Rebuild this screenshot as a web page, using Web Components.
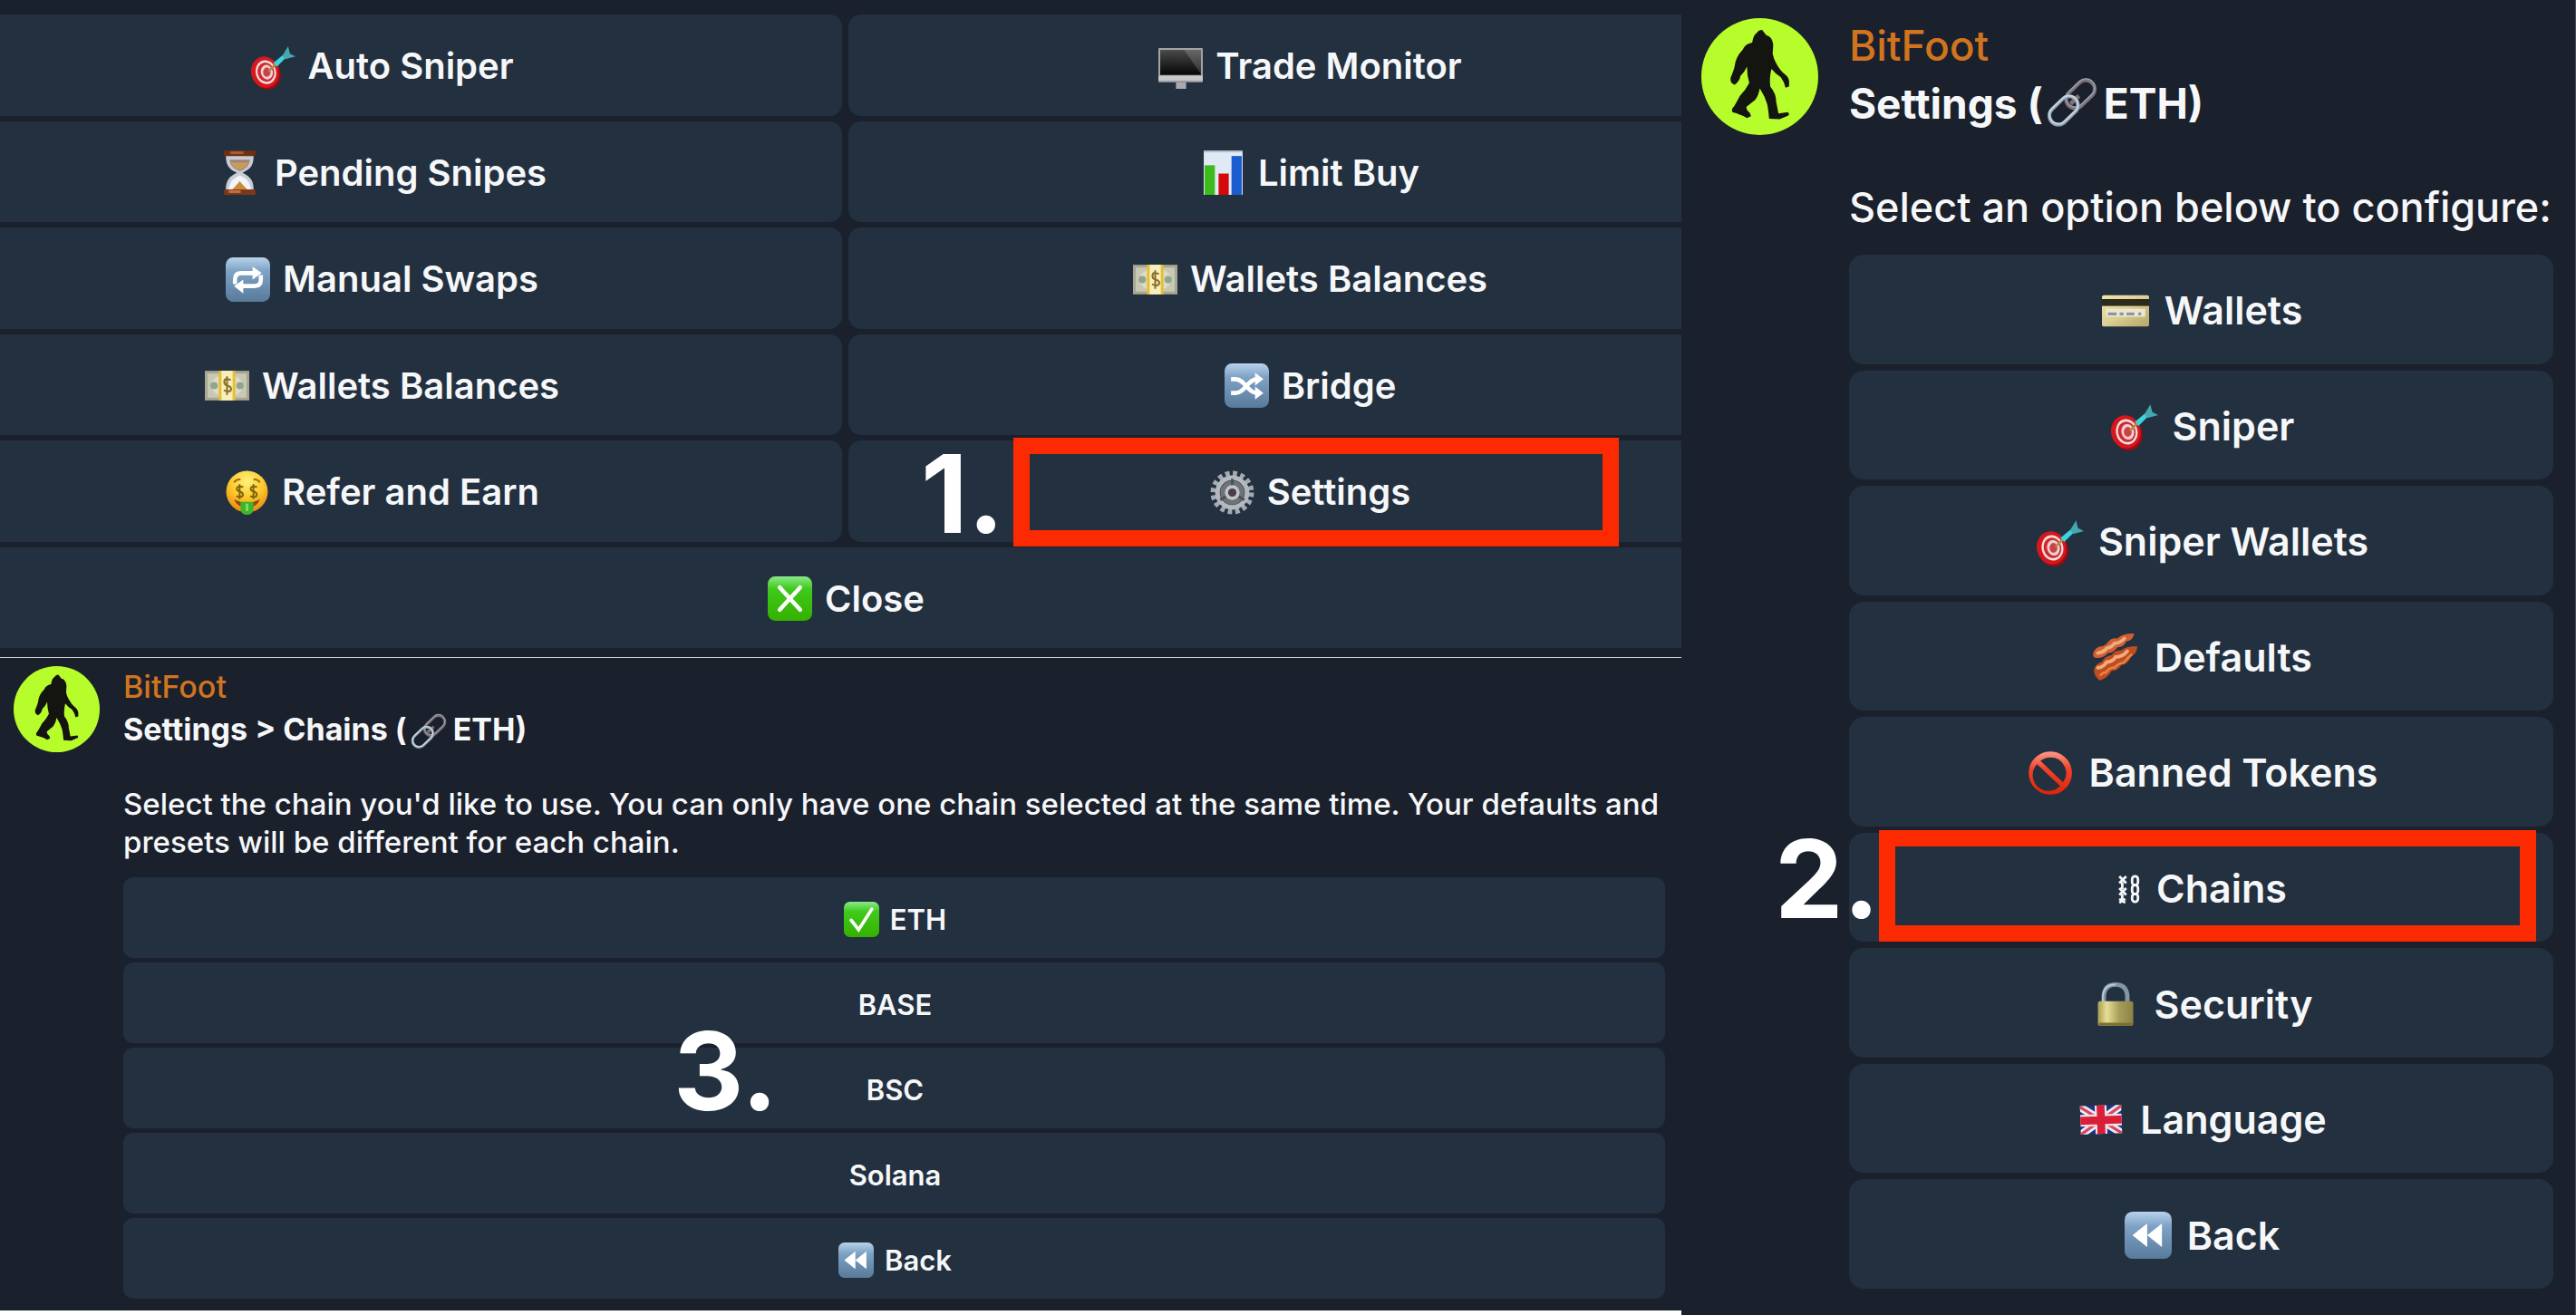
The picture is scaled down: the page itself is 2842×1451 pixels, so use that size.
<!DOCTYPE html>
<html lang="en">
<head>
<meta charset="utf-8">
<title>BitFoot - choosing a chain</title>
<style>
  :root {
    --bg: #1b202d;
    --button: #223040;
    --text: #f6f7f8;
    --brand: #d1741f;
    --mark: #fc2a00;
  }
  body {
    margin: 0;
    background: var(--bg);
    color: var(--text);
    font-family: Inter, Roboto, "Liberation Sans", sans-serif;
  }
  /* the two button columns run past both edges of the panel */
  .menu key-board { margin: 0 -98px 0 -88px; }
</style>
</head>
<body>
<guide-page>
  <bot-panel slot="menu" class="menu">
    <key-board columns="2">
      <menu-button icon="target">Auto Sniper</menu-button>
      <menu-button icon="monitor">Trade Monitor</menu-button>
      <menu-button icon="hourglass">Pending Snipes</menu-button>
      <menu-button icon="chart">Limit Buy</menu-button>
      <menu-button icon="repeat">Manual Swaps</menu-button>
      <menu-button icon="money">Wallets Balances</menu-button>
      <menu-button icon="money">Wallets Balances</menu-button>
      <menu-button icon="shuffle">Bridge</menu-button>
      <menu-button icon="face">Refer and Earn</menu-button>
      <guide-step number="1."><menu-button icon="gear">Settings</menu-button></guide-step>
      <menu-button icon="cross" wide>Close</menu-button>
    </key-board>
  </bot-panel>

  <bot-message slot="chains" class="chains">
    <span slot="title">Settings &gt; Chains (<bot-icon name="link"></bot-icon>ETH)</span>
    <span slot="text">Select the chain you'd like to use. You can only have one chain selected at the same time. Your defaults and presets will be different for each chain.</span>
    <key-board>
      <menu-button icon="check">ETH</menu-button>
      <menu-button>BASE</menu-button>
      <guide-step number="3." plain><menu-button>BSC</menu-button></guide-step>
      <menu-button>Solana</menu-button>
      <menu-button icon="rewind">Back</menu-button>
    </key-board>
  </bot-message>

  <bot-message slot="settings" class="settings">
    <span slot="title">Settings (<bot-icon name="link"></bot-icon>ETH)</span>
    <span slot="text">Select an option below to configure:</span>
    <key-board>
      <menu-button icon="card">Wallets</menu-button>
      <menu-button icon="target">Sniper</menu-button>
      <menu-button icon="target">Sniper Wallets</menu-button>
      <menu-button icon="bacon">Defaults</menu-button>
      <menu-button icon="ban">Banned Tokens</menu-button>
      <guide-step number="2."><menu-button icon="chains">Chains</menu-button></guide-step>
      <menu-button icon="lock">Security</menu-button>
      <menu-button icon="flag">Language</menu-button>
      <menu-button icon="rewind">Back</menu-button>
    </key-board>
  </bot-message>
</guide-page>

<script>
const blueTile = `
  <linearGradient id="g" x2="0" y2="1"><stop offset="0" stop-color="#b9d3ea"/><stop offset=".3" stop-color="#7fa3c6"/><stop offset="1" stop-color="#587a9b"/></linearGradient>
  <rect width="48" height="48" rx="8" fill="url(#g)"/>`;
const greenTile = `
  <linearGradient id="g" x2="0" y2="1"><stop offset="0" stop-color="#8be98a"/><stop offset=".28" stop-color="#3fca1c"/><stop offset="1" stop-color="#35b000"/></linearGradient>
  <rect width="48" height="48" rx="8" fill="url(#g)"/>`;

// name: [viewBox width, drawing], every drawing is 48 units high
const ICONS = {
  target: [48, `
    <ellipse cx="18" cy="32" rx="15" ry="17" transform="rotate(-14 18 32)" fill="#9c0a0e"/>
    <ellipse cx="16" cy="30" rx="15" ry="17" transform="rotate(-14 16 30)" fill="#d6171c"/>
    <ellipse cx="17" cy="30" rx="11" ry="13" transform="rotate(-14 17 30)" fill="#f5dfe0"/>
    <ellipse cx="17" cy="30" rx="9" ry="10.500" transform="rotate(-14 17 30)" fill="#cf2a30"/>
    <ellipse cx="18" cy="30" rx="6.500" ry="8" transform="rotate(-14 18 30)" fill="#f1cfd0"/>
    <ellipse cx="18" cy="30" rx="4" ry="5" fill="#c4444a"/>
    <path d="M20 29l7-7" stroke="#b98a3c" stroke-width="2.500"/>
    <path d="M25 20l12-10 3 3-11 11z" fill="#3cd3dc"/>
    <path d="M35 12L41 2l2 8 6 3-11 3z" fill="#43a9ae"/>`],
  monitor: [48, `
    <linearGradient id="g" x2="0" y2="1"><stop offset="0" stop-color="#4a4a4a"/><stop offset="1" stop-color="#050505"/></linearGradient>
    <rect y="4" width="48" height="37" rx="1" fill="#a3a3a6"/>
    <rect x="2" y="6" width="44" height="27" fill="url(#g)"/>
    <path d="M28 6h18v26z" fill="#fff" opacity=".16"/>
    <rect y="34" width="48" height="5" fill="#c9c9cc"/>
    <path d="M19 41h11v7H19z" fill="#a9a9ad"/>`],
  hourglass: [48, `
    <g transform="translate(6)">
      <path d="M3 5h30c0 10-2 15-12 19 10 5 12 10 12 19H3c0-9 2-14 12-19C5 20 3 15 3 5z" fill="#c8ccd6"/>
      <path d="M7 10h22c-1 7-4 9-10 12h-2C11 19 8 17 7 10z" fill="#9c8576"/>
      <path d="M8 13h20c-2 5-5 6-10 8-5-2-8-3-10-8z" fill="#c99a5e"/>
      <path d="M6 42c1-8 5-12 12-15 7 3 11 7 12 15z" fill="#f2f4f8"/>
      <path d="M9 43c3-3 7-7 9-10 2 3 6 7 9 10z" fill="#c98a3c"/>
      <rect x="1" width="34" height="6" rx="1" fill="#6d3013"/><rect x="8" y="1" width="14" height="3" fill="#a35c33"/>
      <rect x="1" y="42" width="34" height="6" rx="1" fill="#7d3917"/><rect x="6" y="43" width="13" height="3" fill="#c27042"/>
    </g>`],
  chart: [48, `
    <g transform="translate(2)">
      <rect x="1" width="42" height="48" fill="#dfeaf5"/>
      <rect x="1" width="42" height="2" fill="#b5bfc9"/>
      <rect x="2" y="16" width="11" height="32" fill="#3dbb1c"/>
      <rect x="17" y="25" width="11" height="23" fill="#d5090d"/>
      <rect x="31" y="6" width="11" height="42" fill="#1a5bd0"/>
    </g>`],
  repeat: [48, blueTile + `
    <path d="M10 29v-5q0-7 7-7h14M38 19v5q0 7-7 7H17" fill="none" stroke="#fff" stroke-width="4.500"/>
    <path d="M29 10l10 7-10 7zM19 24L9 31l10 8z" fill="#fff"/>`],
  shuffle: [48, blueTile + `
    <path d="M7 17h5c10 0 13 15 23 15h1M7 32h5c10 0 13-15 23-15h1" fill="none" stroke="#fff" stroke-width="4.500"/>
    <path d="M33 10l9 7-9 7zM33 25l9 7-9 7z" fill="#fff"/>`],
  rewind: [48, blueTile + `
    <path d="M8 24l15-12v24zM23 24l15-12v24z" fill="#fff"/>`],
  money: [48, `
    <rect y="8" width="48" height="32" fill="#a8a793"/>
    <rect x="3" y="11" width="42" height="26" fill="#c9c8b3"/>
    <ellipse cx="24" cy="24" rx="17" ry="12" fill="#dcdccb"/>
    <circle cx="10" cy="24" r="4" fill="#8ea58e"/><circle cx="38" cy="24" r="4" fill="#8ea58e"/>
    <rect x="15" y="8" width="18" height="32" fill="#e7bf35"/>
    <rect x="18" y="8" width="12" height="32" fill="#f6efbd"/>
    <path d="M28 18q-7-3-7 2 0 3 3.500 4 4 1 4 4-1 4-8 1M24 14v20" fill="none" stroke="#8a6f2a" stroke-width="2"/>`],
  face: [48, `
    <radialGradient id="g" cy=".25" r=".8"><stop offset="0" stop-color="#fff27a"/><stop offset=".5" stop-color="#fdc92c"/><stop offset="1" stop-color="#e5820c"/></radialGradient>
    <circle cx="24" cy="23" r="22.500" fill="url(#g)"/>
    <path d="M10 13q3-4 7-3M38 13q-3-4-7-3" fill="none" stroke="#a86a12" stroke-width="2"/>
    <path d="M20 18q-7-2-7 2 0 2 3.500 3 3.500 1 3 4-1 3-7 1M16 15v16M35 18q-7-2-7 2 0 2 3.500 3 3.500 1 3 4-1 3-7 1M31 15v16" fill="none" stroke="#7d6410" stroke-width="2"/>
    <path d="M10 31q14 8 28 0-3 9-14 9t-14-9z" fill="#8a4a12"/>
    <path d="M17 34h14v8q-1 6-7 6t-7-6z" fill="#3fb52b"/><path d="M24 36v8" stroke="#7be060" stroke-width="3"/>`],
  cross: [48, greenTile + `
    <path d="M13 12l22 24M35 12L13 36" stroke="#fff" stroke-width="4.500" stroke-linecap="round"/>`],
  check: [48, greenTile + `
    <path d="M10 25l10 13L38 10" fill="none" stroke="#fff" stroke-width="4.500" stroke-linecap="round"/>`],
  gear: [48, `
    <circle cx="24" cy="24" r="20.500" fill="none" stroke="#a3abb1" stroke-width="6" stroke-dasharray="4.600 3.450"/>
    <circle cx="24" cy="24" r="16" fill="none" stroke="#b5b9bd" stroke-width="5"/>
    <circle cx="24" cy="24" r="13" fill="#6d7379"/>
    <path d="M24 24V9M24 24l13 8M24 24l-13 8" stroke="#4b5158" stroke-width="3"/>
    <circle cx="24" cy="24" r="8" fill="#bfc6cb"/><circle cx="24" cy="24" r="4.500" fill="#4a3f42"/>`],
  card: [48, `
    <linearGradient id="g" x2="1" y2="1"><stop offset="0" stop-color="#efe5a8"/><stop offset=".5" stop-color="#dccf94"/><stop offset="1" stop-color="#b5a66b"/></linearGradient>
    <rect y="8" width="48" height="32" rx="2" fill="url(#g)"/>
    <rect y="12" width="48" height="7" fill="#2b2a1c"/>
    <rect x="4" y="22" width="40" height="8" fill="#ece8cf"/>
    <path d="M6 27h9M18 27h4M25 27h8M37 27h3" stroke="#8f93a8" stroke-width="3"/>`],
  bacon: [48, `
    <path d="M1 21q2-8 10-8 3-1 6-5t9-3q5-5 17-5-1 7-8 8-3 6-9 6-4 6-10 6-4 5-11 5-4 0-4-4z" fill="#d25f33"/>
    <path d="M2 37q2-7 8-8 3-6 10-7 3-5 10-5 5-4 16-4 0 8-6 10-3 8-10 9-4 6-10 6-4 7-12 10-6-4-6-11z" fill="#c04c22"/>
    <path d="M6 20q6-1 9-5 5-1 8-5 6 0 10-5M6 35q6-1 9-6 6 0 9-5 7 0 12-6" fill="none" stroke="#f0ab7c" stroke-width="3.500" stroke-linecap="round"/>
    <path d="M8 43q4-4 6-3 4-6 9-5 4-5 9-5 4-5 9-9" fill="none" stroke="#e8833f" stroke-width="2.500"/>`],
  ban: [48, `
    <linearGradient id="g" x2="0" y2="1"><stop offset="0" stop-color="#ff9a86"/><stop offset=".4" stop-color="#f2432a"/><stop offset="1" stop-color="#dc2408"/></linearGradient>
    <path d="M24 2a22 22 0 1 0 .1 0zM24 8a16 16 0 0 1 13 25.500L14 11.500A16 16 0 0 1 24 8zM10.500 15L34 37.200A16 16 0 0 1 10.500 15z" fill="url(#g)" fill-rule="evenodd"/>`],
  chains: [24, `
    <g fill="none" stroke="#f6f7f8" stroke-width="2.600">
      <path d="M2 11l7 7M9 11l-7 7M2 23l7 7M9 23l-7 7M2 34l6 4M8 34l-6 4"/>
      <rect x="15" y="11" width="6" height="9" rx="3"/><rect x="15" y="20" width="6" height="9" rx="3"/><rect x="15" y="29" width="6" height="8" rx="3"/>
      <path d="M5 17v7M5 29v6"/>
    </g>`],
  lock: [48, `
    <linearGradient id="g"><stop offset="0" stop-color="#a89c50"/><stop offset=".25" stop-color="#e6de94"/><stop offset=".6" stop-color="#a79e5a"/><stop offset="1" stop-color="#8c8344"/></linearGradient>
    <g transform="translate(2)">
      <path d="M10 24v-7q0-13 12-13t12 13v7" fill="none" stroke="#8297a5" stroke-width="4.500"/>
      <path d="M9 22v-6Q10 4 22 4" fill="none" stroke="#c1d0da" stroke-width="1.500"/>
      <rect x="4" y="21" width="36" height="25" rx="2" fill="url(#g)"/><path d="M5 43h34v3H5z" fill="#7c6f34"/>
    </g>`],
  flag: [48, `
    <g transform="rotate(-2 24 24)">
    <clipPath id="c"><rect x="3" y="9" width="42" height="29"/></clipPath>
    <g clip-path="url(#c)">
      <path d="M0 8h48v32H0z" fill="#1b3486"/>
      <path d="M0 8l48 32M48 8L0 40" stroke="#ecebf2" stroke-width="8"/>
      <path d="M0 8l48 32M48 8L0 40" stroke="#d9475c" stroke-width="3"/>
      <path d="M24 8v32M0 24h48" stroke="#f3dfe4" stroke-width="12"/>
      <path d="M24 8v32M0 24h48" stroke="#d91f38" stroke-width="8"/>
    </g></g>`],
  link: [48, `
    <g fill="none" transform="rotate(46 24 24)">
      <rect x="15.500" y="-2.500" width="17" height="31" rx="8.500" stroke="#7b7377" stroke-width="3.500"/>
      <rect x="14.500" y="-3.500" width="17" height="31" rx="8.500" stroke="#9aa3b5" stroke-width="1.200"/>
      <path d="M24 15v11" stroke="#86706f" stroke-width="4"/>
      <rect x="15.500" y="19.500" width="17" height="31" rx="8.500" stroke="#8fa3b5" stroke-width="3.500"/>
      <rect x="15" y="19" width="17" height="31" rx="8.500" stroke="#cbd8e3" stroke-width="1.500"/>
    </g>`],
};

class BotIcon extends HTMLElement {
  constructor() {
    super();
    this.attachShadow({ mode: "open" });
  }

  connectedCallback() {
    const [width, drawing] = ICONS[this.getAttribute("name")];
    this.shadowRoot.innerHTML = `
    <style>
      :host { display: inline-block; height: var(--icon-size); flex: none; }
      :host([name="link"]) {
        height: var(--link-size);
        margin: -8px 7px -8px 4px;
        vertical-align: -2px;
      }
      svg { display: block; height: 100%; overflow: visible; }
    </style>
    <svg viewBox="0 0 ${width} 48" aria-hidden="true">${drawing}</svg>`;
  }
}

class MenuButton extends HTMLElement {
  constructor() {
    super();
    this.attachShadow({ mode: "open" });
  }

  connectedCallback() {
    const icon = this.getAttribute("icon");
    this.shadowRoot.innerHTML = `
    <style>
      :host { display: grid; }
      :host([wide]) { grid-column: 1 / -1; }
      button {
        display: flex;
        align-items: center;
        justify-content: center;
        gap: var(--icon-gap);
        padding: 3px 0 0 2px;
        border: 0;
        border-radius: var(--radius);
        background: var(--button);
        color: inherit;
        font: 600 var(--button-font) / 1 Inter, Roboto, sans-serif;
        cursor: pointer;
      }
      button:hover { background: #293a4d; }
    </style>
    <button type="button">
      ${icon ? `<bot-icon name="${icon}"></bot-icon>` : ""}
      <span><slot></slot></span>
    </button>`;
  }
}

class KeyBoard extends HTMLElement {
  constructor() {
    super();
    this.attachShadow({ mode: "open" });
  }

  connectedCallback() {
    const columns = this.getAttribute("columns") || 1;
    this.shadowRoot.innerHTML = `
    <style>
      :host {
        display: grid;
        flex: 1;
        grid-template-columns: repeat(${columns}, minmax(0, 1fr));
        grid-auto-rows: 1fr;
        gap: var(--key-gap);
      }
    </style>
    <slot></slot>`;
  }
}

// Tutorial annotation: a big number and a red frame laid over one button
class GuideStep extends HTMLElement {
  constructor() {
    super();
    this.attachShadow({ mode: "open" });
  }

  connectedCallback() {
    const frame = this.hasAttribute("plain") ? "" : `<div class="frame"></div>`;
    this.shadowRoot.innerHTML = `
    <style>
      :host { display: grid; position: relative; }
      .frame {
        position: absolute;
        inset: var(--frame-inset);
        border: 18px solid var(--mark);
        pointer-events: none;
      }
      .number {
        position: absolute;
        top: var(--number-top);
        left: var(--number-left);
        color: #fff;
        font-size: 120px;
        font-weight: 700;
        line-height: 120px;
        pointer-events: none;
      }
    </style>
    <slot></slot>
    ${frame}
    <span class="number">${this.getAttribute("number")}</span>`;
  }
}

class BotAvatar extends HTMLElement {
  constructor() {
    super();
    this.attachShadow({ mode: "open" });
    this.shadowRoot.innerHTML = `
    <style>
      :host { display: block; width: var(--avatar); height: var(--avatar); flex: none; }
      svg { display: block; }
    </style>
    <svg viewBox="0 0 100 100" role="img" aria-label="BitFoot">
      <circle cx="50" cy="50" r="50" fill="#b7fc2b"/>
      <path fill="#141511" d="M55.500 14.500q5 1 6 8l-.5 8q1 5 3 8 3 6 8 10 4 3 3 10l-3 1q-1-5-4-9-5-3-8-7-2 8-1 15 5 6 5 13l2 10 8-1q2 2 0 3l-7 3-9-.5q-.5-6-1.500-12-2-7-6.500-14-1 6-4 10l-7.500 6q0 3 3 5l1 3-3.500 1.500q-5-3-12.500-5-1-3 1.500-5 3-5 5-9 5-5 8-11-2-7-2-14-2 5-5.500 8-1 5-5 7.500-4-1-3.500-6 3-7 3.500-10 1-8 7-14 2-5 8-6 1-7 4-8.500 1.500-2.500 4.500-2.500z"/>
    </svg>`;
  }
}

class BotPanel extends HTMLElement {
  constructor() {
    super();
    this.attachShadow({ mode: "open" });
    this.shadowRoot.innerHTML = `
    <style>
      :host { display: flex; overflow: hidden; }
    </style>
    <slot></slot>`;
  }
}

class BotMessage extends HTMLElement {
  constructor() {
    super();
    this.attachShadow({ mode: "open" });
    this.shadowRoot.innerHTML = `
    <style>
      :host { display: flex; gap: var(--avatar-gap); }
      .body { display: flex; flex: 1; flex-direction: column; min-width: 0; padding-top: 2px; }
      .name, .title, p { margin: 0; line-height: var(--line); }
      .name, .title { font-size: var(--head-font); }
      .name { color: var(--brand); font-weight: 500; padding-bottom: var(--name-gap); }
      .title { font-weight: 700; }
      p { margin: var(--title-gap) -8px var(--text-gap) 0; font-size: var(--font); font-weight: 500; }
    </style>
    <bot-avatar></bot-avatar>
    <div class="body">
      <div class="name">BitFoot</div>
      <h2 class="title"><slot name="title"></slot></h2>
      <p><slot name="text"></slot></p>
      <slot></slot>
    </div>`;
  }
}

class GuidePage extends HTMLElement {
  constructor() {
    super();
    this.attachShadow({ mode: "open" });
    this.shadowRoot.innerHTML = `
    <style>
      :host {
        display: grid;
        grid-template-columns: minmax(0, 1855fr) minmax(0, 987fr);
        min-height: 100vh;
      }
      .left {
        display: grid;
        grid-template-rows: 726fr 720fr;
        padding-bottom: 5px;
        background: #fff;
      }
      .right { display: grid; border-right: 1px solid #4a4e58; }
      ::slotted(*) { background: var(--bg); box-sizing: border-box; min-width: 0; }
      ::slotted(.menu) {
        --icon-size: 49px; --icon-gap: 14px; --button-font: 40px;
        --key-gap: 6px 7px; --radius: 14px;
        --frame-inset: -3px 167px -5px 182px;
        --number-top: -1px; --number-left: 80px;
        padding: 16px 0 10px;
        border-bottom: 1px solid #c9cbce;
      }
      ::slotted(.chains) {
        --icon-size: 39px; --icon-gap: 12px; --button-font: 31px;
        --key-gap: 5px; --radius: 11px;
        --avatar: 95px; --avatar-gap: 26px;
        --head-font: 34px; --font: 33px; --link-size: 40px;
        --line: 42px; --name-gap: 5px; --title-gap: 40px; --text-gap: 18px;
        --number-top: -34px; --number-left: 607px;
        padding: 9px 18px 13px 15px;
      }
      ::slotted(.settings) {
        --icon-size: 52px; --icon-gap: 17px; --button-font: 43px;
        --key-gap: 7px; --radius: 16px;
        --avatar: 129px; --avatar-gap: 34px;
        --head-font: 46px; --font: 45px; --link-size: 56px;
        --line: 57px; --name-gap: 7px; --title-gap: 57px; --text-gap: 24px;
        --frame-inset: -3px 19px 0 33px;
        --number-top: -9px; --number-left: -82px;
        padding: 20px 24px 29px 22px;
      }
    </style>
    <div class="left"><slot name="menu"></slot><slot name="chains"></slot></div>
    <div class="right"><slot name="settings"></slot></div>`;
  }
}

customElements.define("bot-icon", BotIcon);
customElements.define("menu-button", MenuButton);
customElements.define("key-board", KeyBoard);
customElements.define("guide-step", GuideStep);
customElements.define("bot-avatar", BotAvatar);
customElements.define("bot-panel", BotPanel);
customElements.define("bot-message", BotMessage);
customElements.define("guide-page", GuidePage);
</script>
</body>
</html>
